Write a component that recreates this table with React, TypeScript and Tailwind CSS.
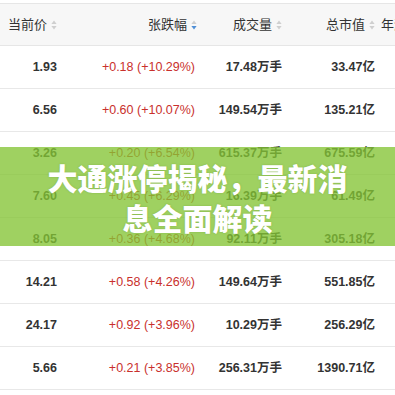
import React from "react";

const rows = [
  ["1.93", "+0.18 (+10.29%)", "17.48万手", "33.47亿"],
  ["6.56", "+0.60 (+10.07%)", "149.54万手", "135.21亿"],
  ["3.26", "+0.20 (+6.54%)", "615.37万手", "675.59亿"],
  ["7.60", "+0.45 (+6.29%)", "16.39万手", "61.49亿"],
  ["8.05", "+0.36 (+4.68%)", "92.11万手", "305.18亿"],
  ["14.21", "+0.58 (+4.26%)", "149.64万手", "551.85亿"],
  ["24.17", "+0.92 (+3.96%)", "10.29万手", "256.29亿"],
  ["5.66", "+0.21 (+3.85%)", "256.31万手", "1390.71亿"],
];

function SortIcon({ active }: { active?: boolean }) {
  return (
    <svg width="6" height="10" viewBox="0 0 6 10" className="shrink-0">
      <path d="M3 0.5 L5.6 4 L0.4 4 Z" fill="#cfcfcf" />
      <path d="M3 9.5 L5.6 6 L0.4 6 Z" fill={active ? "#4f8fd6" : "#cfcfcf"} />
    </svg>
  );
}

const grid = "grid grid-cols-[67px_140px_84px_90px_1fr]";

export default function App() {
  return (
    <div
      className="relative w-[395px] h-[395px] overflow-hidden bg-white pt-[3px]"
      style={{ fontFamily: '"Liberation Sans", Arial, "Noto Sans CJK SC", sans-serif' }}
    >
      <div className={`${grid} h-[43px] bg-[#f7f7f7] border-t border-b border-[#e6e6e6] text-[13px] text-[#333]`}>
        <div className="flex items-center justify-end gap-[4px] pr-[10px]">
          <span>当前价</span>
          <SortIcon />
        </div>
        <div className="flex items-center justify-end gap-[4px] pr-[10px]">
          <span>张跌幅</span>
          <SortIcon active />
        </div>
        <div className="flex items-center justify-end gap-[4px] pr-[9px]">
          <span>成交量</span>
          <SortIcon />
        </div>
        <div className="flex items-center justify-end gap-[4px] pr-[6px]">
          <span>总市值</span>
          <SortIcon />
        </div>
        <div className="flex items-center overflow-hidden whitespace-nowrap">
          <span>年涨跌幅</span>
        </div>
      </div>
      {rows.map((r, i) => (
        <div key={i} className={`${grid} h-[43px] border-b border-[#e8e8e8] text-[12.5px]`}>
          <div className="flex items-center justify-end pr-[10px] font-bold text-[#333]">{r[0]}</div>
          <div className="flex items-center justify-end pr-[12px] text-[#c9302c]">{r[1]}</div>
          <div className="flex items-center justify-end pr-[9px] font-bold text-[#333]">{r[2]}</div>
          <div className="flex items-center justify-end pr-[6px] font-bold text-[#333]">{r[3]}</div>
          <div />
        </div>
      ))}
      <div className="absolute left-0 right-0 top-[147px] h-[99px] bg-[#84c434]/[0.78] flex items-center justify-center">
        <div
          className="w-[312px] text-center text-white font-black text-[30px] leading-[40px] [text-shadow:0_0_2px_rgba(80,120,30,0.35)]"
          style={{ fontFamily: '"Noto Sans CJK SC", "Noto Sans", sans-serif' }}
        >
          大通涨停揭秘，最新消息全面解读
        </div>
      </div>
    </div>
  );
}
